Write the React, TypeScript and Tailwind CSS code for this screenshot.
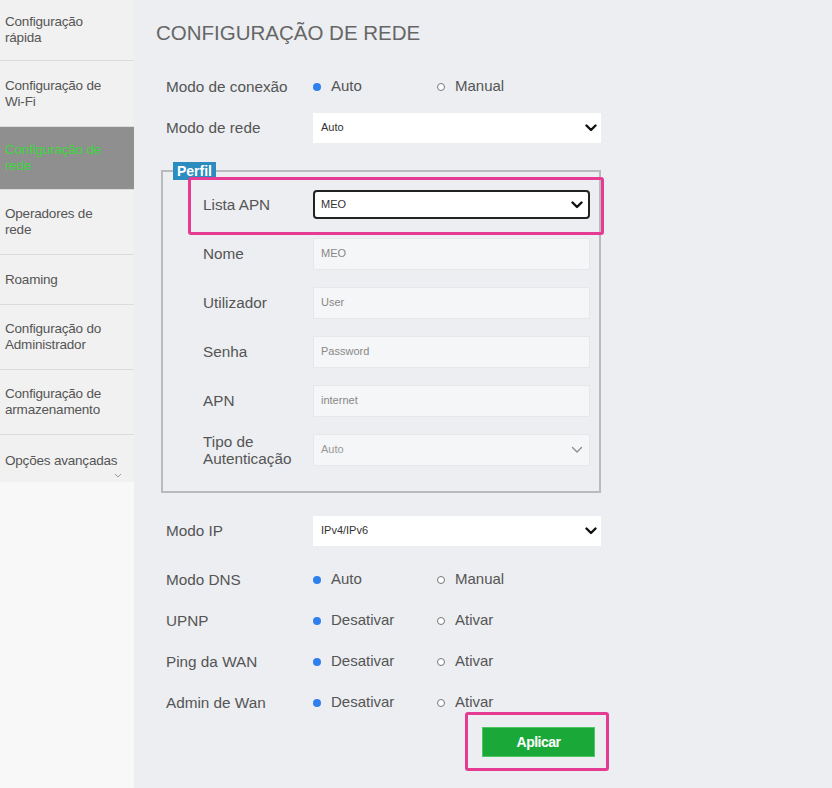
import type { ReactNode } from 'react'

const MENU: { label: string[]; h: string; active?: boolean }[] = [
  { label: ['Configuração', 'rápida'], h: 'h-[61px]' },
  { label: ['Configuração de', 'Wi-Fi'], h: 'h-[66px]' },
  { label: ['Configuração de', 'rede'], h: 'h-[63px]', active: true },
  { label: ['Operadores de', 'rede'], h: 'h-[65px]' },
  { label: ['Roaming'], h: 'h-[50px]' },
  { label: ['Configuração do', 'Administrador'], h: 'h-[65px]' },
  { label: ['Configuração de', 'armazenamento'], h: 'h-[65px]' },
]

const Chevron = ({ thin }: { thin?: boolean }) => (
  <svg width="12" height="8" viewBox="0 0 12 8" className="shrink-0">
    <path
      d="M1.5 1.5 L6 6 L10.5 1.5"
      fill="none"
      stroke={thin ? '#8a8a8a' : '#111'}
      strokeWidth={thin ? 1.3 : 2.4}
      strokeLinecap="round"
      strokeLinejoin="round"
    />
  </svg>
)

const Radio = ({ on, label }: { on?: boolean; label: string }) => (
  <div className="flex items-center gap-[10px] w-[124px]">
    {on ? (
      <span className="w-[8px] h-[8px] rounded-full bg-[#2f80ed]" />
    ) : (
      <span className="w-[8px] h-[8px] rounded-full border border-[#777] bg-white" />
    )}
    <span className="text-[15px] text-[#555]">{label}</span>
  </div>
)

const Row = ({ label, children, h = 'h-[41px]' }: { label: string; children: ReactNode; h?: string }) => (
  <div className={`flex items-center ${h}`}>
    <div className="w-[147px] text-[15.3px] text-[#555] leading-[17px]">{label}</div>
    {children}
  </div>
)

const Select = ({ value }: { value: string }) => (
  <div className="w-[288px] h-[30px] bg-white flex items-center justify-between pl-[8px] pr-[4px]">
    <span className="text-[11px] text-[#333]">{value}</span>
    <Chevron />
  </div>
)

const Input = ({ value }: { value: string }) => (
  <div className="w-[277px] h-[32px] bg-[#f5f6f7] border border-[#e6e7e9] flex items-center pl-[7px]">
    <span className="text-[11px] text-[#888]">{value}</span>
  </div>
)

const ProfileRow = ({ label, children }: { label: ReactNode; children: ReactNode }) => (
  <div className="relative flex items-center h-[49px] pl-[40px]">
    <div className="w-[110px] text-[15.3px] text-[#555] leading-[17px]">{label}</div>
    {children}
  </div>
)

export default function App() {
  return (
    <div
      className="flex w-[832px] h-[788px] bg-[#eceef1] overflow-hidden"
      style={{ fontFamily: '"Liberation Sans", Arial, sans-serif' }}
    >
      {/* sidebar */}
      <aside className="w-[134px] shrink-0 bg-[#f8f8f8] flex flex-col">
        {MENU.map(item => (
          <div
            key={item.label.join(' ')}
            className={`${item.h} flex flex-col justify-center px-[5px] border-b border-[#dcdcdc] text-[13.5px] leading-[16px] tracking-[-0.2px] ${
              item.active ? 'bg-[#8f8f8f] text-[#3ed63e]' : 'bg-[#f1f1f1] text-[#555]'
            }`}
          >
            {item.label.map(l => (
              <span key={l}>{l}</span>
            ))}
          </div>
        ))}
        <div className="h-[47px] bg-[#f1f1f1] px-[5px] pt-[18px] text-[13.5px] leading-[16px] tracking-[-0.2px] text-[#555] relative">
          Opções avançadas
          <svg width="8" height="5" viewBox="0 0 8 5" className="absolute right-[12px] bottom-[4px]">
            <path d="M1 1 L4 4 L7 1" fill="none" stroke="#999" strokeWidth="1" />
          </svg>
        </div>
      </aside>

      {/* content */}
      <main className="flex-1 pl-[22px]">
        <h1 className="h-[66px] flex items-center text-[20.5px] text-[#666] font-normal">CONFIGURAÇÃO DE REDE</h1>

        <div className="pl-[10px]">
          <Row label="Modo de conexão">
            <Radio on label="Auto" />
            <Radio label="Manual" />
          </Row>
          <Row label="Modo de rede">
            <Select value="Auto" />
          </Row>
        </div>

        <fieldset className="mt-[14px] ml-[5px] w-[440px] border-2 border-[#b9babc] pb-[17px]">
          <legend className="ml-[10px] px-[4px] h-[18px] bg-[#2b8cc0] text-white text-[14px] font-bold leading-[18px]">
            Perfil
          </legend>
          <ProfileRow label="Lista APN">
            <div className="w-[277px] h-[29px] bg-white border-2 border-[#222] rounded-[4px] flex items-center justify-between pl-[6px] pr-[5px]">
              <span className="text-[11px] text-[#333]">MEO</span>
              <Chevron />
            </div>
            <div className="absolute left-[25px] right-[-5px] top-[-3px] bottom-[-6px] border-[3px] border-[#e63b93] rounded-[3px] pointer-events-none" />
          </ProfileRow>
          <ProfileRow label="Nome">
            <Input value="MEO" />
          </ProfileRow>
          <ProfileRow label="Utilizador">
            <Input value="User" />
          </ProfileRow>
          <ProfileRow label="Senha">
            <Input value="Password" />
          </ProfileRow>
          <ProfileRow label="APN">
            <Input value="internet" />
          </ProfileRow>
          <ProfileRow
            label={
              <>
                Tipo de
                <br />
                Autenticação
              </>
            }
          >
            <div className="w-[277px] h-[32px] bg-[#f5f6f7] border border-[#e6e7e9] flex items-center justify-between pl-[7px] pr-[6px]">
              <span className="text-[11px] text-[#999]">Auto</span>
              <Chevron thin />
            </div>
          </ProfileRow>
        </fieldset>

        <div className="pl-[10px] mt-[17px]">
          <Row label="Modo IP">
            <Select value="IPv4/IPv6" />
          </Row>
          <div className="mt-[8px]">
            <Row label="Modo DNS">
              <Radio on label="Auto" />
              <Radio label="Manual" />
            </Row>
            <Row label="UPNP">
              <Radio on label="Desativar" />
              <Radio label="Ativar" />
            </Row>
            <Row label="Ping da WAN">
              <Radio on label="Desativar" />
              <Radio label="Ativar" />
            </Row>
            <Row label="Admin de Wan">
              <Radio on label="Desativar" />
              <Radio label="Ativar" />
            </Row>
          </div>
          <div className="relative mt-[4px] ml-[316px] w-[113px] h-[30px]">
            <button className="w-full h-full bg-[#1aa838] border border-[#4cc764] text-white text-[14px] font-bold tracking-[-0.5px]">
              Aplicar
            </button>
            <div className="absolute left-[-17px] right-[-14px] top-[-15px] bottom-[-14px] border-[3px] border-[#e63b93] rounded-[3px] pointer-events-none" />
          </div>
        </div>
      </main>
    </div>
  )
}
